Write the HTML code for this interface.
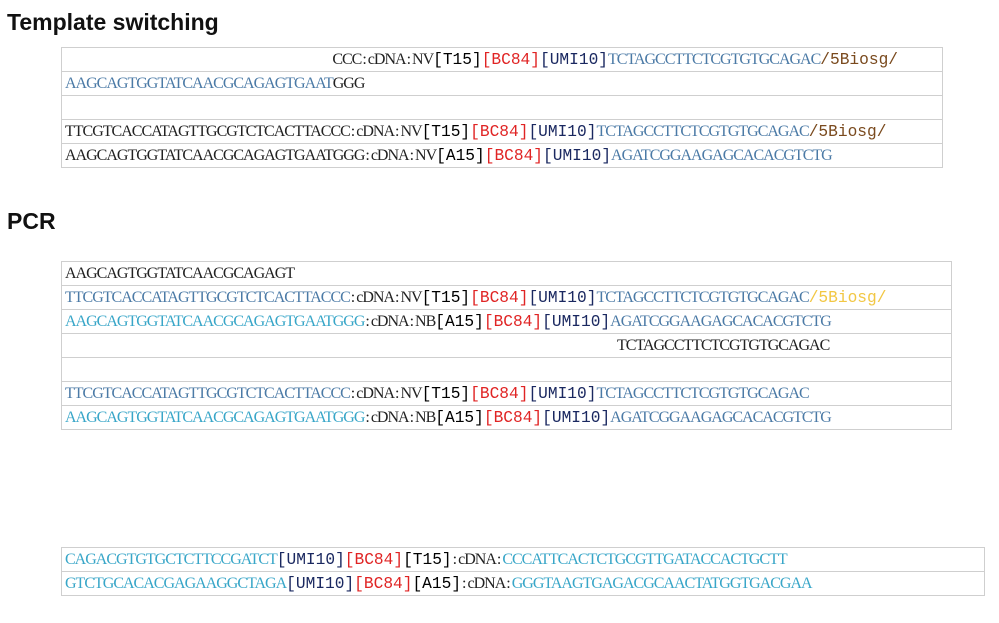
<!DOCTYPE html>
<html><head><meta charset="utf-8"><style>
body{margin:0;width:999px;height:623px;background:#fff;position:relative;overflow:hidden}
h1{position:absolute;margin:0;font:bold 23px "Liberation Sans",sans-serif;color:#111;left:7px}
.t{position:absolute;border-top:1px solid #cfcfcf;border-left:1px solid #cfcfcf;border-right:1px solid #cfcfcf}
.r{height:23px;border-bottom:1px solid #cfcfcf;white-space:nowrap;line-height:24px;padding-left:3px;font-family:"Liberation Serif",serif;font-size:16px;letter-spacing:-1px;color:#222}
.m{font-family:"Liberation Mono",monospace;font-size:16.2px;letter-spacing:0;color:#000}
.red{color:#e02424}.nv{color:#1a2860}
.bl{color:#4b7aa6}.cy{color:#38a6c8}.br{color:#7a4a1e}.yl{color:#f2c744}
.c{letter-spacing:0;margin:0 1px}
</style></head><body>
<h1 style="top:9px">Template switching</h1>
<div class="t" style="left:61px;top:47px;width:880px">
<div class="r" style="text-align:right;padding-right:44px">CCC<span class="c">:</span>cDNA<span class="c">:</span>NV<span class="m">[T15]</span><span class="m red">[BC84]</span><span class="m nv">[UMI10]</span><span class="bl">TCTAGCCTTCTCGTGTGCAGAC</span><span class="m br">/5Biosg/</span></div>
<div class="r"><span class="bl">AAGCAGTGGTATCAACGCAGAGTGAAT</span>GGG</div>
<div class="r"></div>
<div class="r">TTCGTCACCATAGTTGCGTCTCACTTACCC<span class="c">:</span>cDNA<span class="c">:</span>NV<span class="m">[T15]</span><span class="m red">[BC84]</span><span class="m nv">[UMI10]</span><span class="bl">TCTAGCCTTCTCGTGTGCAGAC</span><span class="m br">/5Biosg/</span></div>
<div class="r">AAGCAGTGGTATCAACGCAGAGTGAATGGG<span class="c">:</span>cDNA<span class="c">:</span>NV<span class="m">[A15]</span><span class="m red">[BC84]</span><span class="m nv">[UMI10]</span><span class="bl">AGATCGGAAGAGCACACGTCTG</span></div>
</div>
<h1 style="top:208px">PCR</h1>
<div class="t" style="left:61px;top:261px;width:889px">
<div class="r">AAGCAGTGGTATCAACGCAGAGT</div>
<div class="r"><span class="bl">TTCGTCACCATAGTTGCGTCTCACTTACCC</span><span class="c">:</span>cDNA<span class="c">:</span>NV<span class="m">[T15]</span><span class="m red">[BC84]</span><span class="m nv">[UMI10]</span><span class="bl">TCTAGCCTTCTCGTGTGCAGAC</span><span class="m yl">/5Biosg/</span></div>
<div class="r"><span class="cy">AAGCAGTGGTATCAACGCAGAGTGAATGGG</span><span class="c">:</span>cDNA<span class="c">:</span>NB<span class="m">[A15]</span><span class="m red">[BC84]</span><span class="m nv">[UMI10]</span><span class="bl">AGATCGGAAGAGCACACGTCTG</span></div>
<div class="r" style="padding-left:555px">TCTAGCCTTCTCGTGTGCAGAC</div>
<div class="r"></div>
<div class="r"><span class="bl">TTCGTCACCATAGTTGCGTCTCACTTACCC</span><span class="c">:</span>cDNA<span class="c">:</span>NV<span class="m">[T15]</span><span class="m red">[BC84]</span><span class="m nv">[UMI10]</span><span class="bl">TCTAGCCTTCTCGTGTGCAGAC</span></div>
<div class="r"><span class="cy">AAGCAGTGGTATCAACGCAGAGTGAATGGG</span><span class="c">:</span>cDNA<span class="c">:</span>NB<span class="m">[A15]</span><span class="m red">[BC84]</span><span class="m nv">[UMI10]</span><span class="bl">AGATCGGAAGAGCACACGTCTG</span></div>
</div>
<div class="t" style="left:61px;top:547px;width:922px">
<div class="r"><span class="cy">CAGACGTGTGCTCTTCCGATCT</span><span class="m nv">[UMI10]</span><span class="m red">[BC84]</span><span class="m">[T15]</span><span class="c">:</span>cDNA<span class="c">:</span><span class="cy">CCCATTCACTCTGCGTTGATACCACTGCTT</span></div>
<div class="r"><span class="cy">GTCTGCACACGAGAAGGCTAGA</span><span class="m nv">[UMI10]</span><span class="m red">[BC84]</span><span class="m">[A15]</span><span class="c">:</span>cDNA<span class="c">:</span><span class="cy">GGGTAAGTGAGACGCAACTATGGTGACGAA</span></div>
</div>
</body></html>
